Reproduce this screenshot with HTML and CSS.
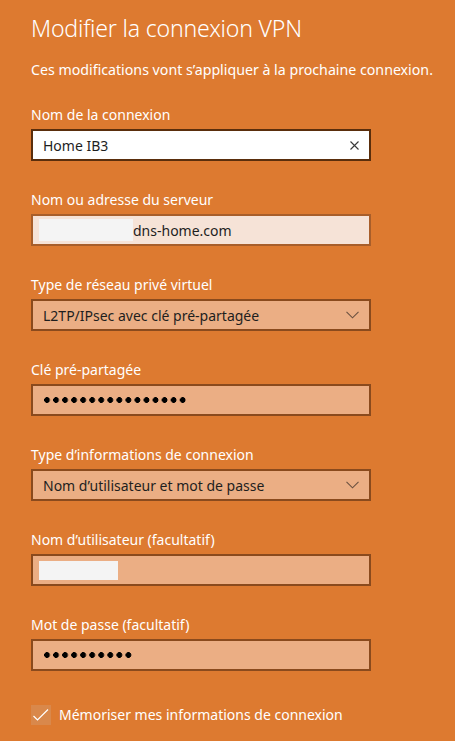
FILE: index.html
```html
<!DOCTYPE html>
<html lang="fr">
<head>
<meta charset="utf-8">
<title>Modifier la connexion VPN</title>
<link rel="stylesheet" href="styles.css">
</head>
<body>
<main class="panel">
  <h1 class="title">Modifier la connexion VPN</h1>
  <p class="intro">Ces modifications vont s’appliquer à la prochaine connexion.</p>

  <div class="group">
    <label class="label">Nom de la connexion</label>
    <div class="field field-focus">
      <span class="value">Home IB3</span>
      <svg class="icon-x" width="9" height="9" viewBox="0 0 9 9"><path d="M0.5 0.5L8.5 8.5M8.5 0.5L0.5 8.5" stroke="#3a3a3a" stroke-width="1.1" fill="none"/></svg>
    </div>
  </div>

  <div class="group">
    <label class="label">Nom ou adresse du serveur</label>
    <div class="field field-light">
      <span class="mask mask-server"></span><span class="value">dns-home.com</span>
    </div>
  </div>

  <div class="group">
    <label class="label">Type de réseau privé virtuel</label>
    <div class="field">
      <span class="value">L2TP/IPsec avec clé pré-partagée</span>
      <svg class="chev" width="13" height="8" viewBox="0 0 13 8"><path d="M0.5 0.8L6.5 6.8L12.5 0.8" stroke="#6b5140" stroke-width="1.1" fill="none"/></svg>
    </div>
  </div>

  <div class="group">
    <label class="label">Clé pré-partagée</label>
    <div class="field">
      <span class="dots dots-16"></span>
    </div>
  </div>

  <div class="group">
    <label class="label">Type d’informations de connexion</label>
    <div class="field">
      <span class="value">Nom d’utilisateur et mot de passe</span>
      <svg class="chev" width="13" height="8" viewBox="0 0 13 8"><path d="M0.5 0.8L6.5 6.8L12.5 0.8" stroke="#6b5140" stroke-width="1.1" fill="none"/></svg>
    </div>
  </div>

  <div class="group">
    <label class="label">Nom d’utilisateur (facultatif)</label>
    <div class="field">
      <span class="mask mask-user"></span>
    </div>
  </div>

  <div class="group">
    <label class="label">Mot de passe (facultatif)</label>
    <div class="field">
      <span class="dots dots-10"></span>
    </div>
  </div>

  <div class="check-row">
    <span class="checkbox">
      <svg width="20" height="20" viewBox="0 0 20 20"><path d="M2.5 11L6.5 15L17 4.5" stroke="#ffffff" stroke-width="1.2" fill="none"/></svg>
    </span>
    <span class="check-label">Mémoriser mes informations de connexion</span>
  </div>
</main>
</body>
</html>
```

FILE: styles.css
```css
html, body {
  margin: 0;
  padding: 0;
  background: #dd7a30;
}
body {
  font-family: "Noto Sans", "Open Sans", "Liberation Sans", sans-serif;
  color: #ffffff;
  width: 455px;
  height: 741px;
  overflow: hidden;
}
.panel {
  padding: 12px 0 0 31px;
  display: flex;
  flex-direction: column;
}
.title {
  margin: 0;
  font-weight: 300;
  font-size: 23.1px;
  line-height: 32px;
  letter-spacing: -0.2px;
}
.intro {
  margin: 16px 0 0;
  font-size: 14.2px;
  line-height: 20px;
}
.group {
  display: flex;
  flex-direction: column;
  margin-top: 25px;
  width: 340px;
}
.group + .group {
  margin-top: 29px;
}
.label {
  font-size: 14px;
  line-height: 20px;
  margin-bottom: 4px;
}
.field {
  box-sizing: border-box;
  height: 32px;
  width: 340px;
  border: 2px solid #8a4a1d;
  background: #ebae84;
  display: flex;
  align-items: center;
  padding: 0 10px 0 10px;
  color: #1e1e1e;
  font-size: 14px;
}
.field-focus {
  background: #ffffff;
  border-color: #5a2e0c;
}
.field-light {
  background: #f6e3d7;
  border-color: #a85e2a;
  padding-left: 6px;
}
.value {
  white-space: nowrap;
  flex: 1;
}
.mask {
  display: block;
  background: #f4f4f4;
  flex: none;
}
.mask-server {
  width: 94px;
  height: 22px;
}
.mask-user {
  width: 79px;
  height: 19px;
  margin-left: -4px;
}
.dots {
  display: block;
  height: 8px;
  background: radial-gradient(circle at 3px 4px, #000 2.6px, transparent 3.1px) 0 0 / 9.05px 8px repeat-x;
  margin-left: 1px;
}
.dots-16 { width: 143px; }
.dots-10 { width: 89px; }
.check-row {
  display: flex;
  align-items: center;
  margin-top: 34px;
  gap: 8px;
}
.checkbox {
  width: 20px;
  height: 20px;
  background: #d9884b;
  display: block;
}
.checkbox svg { display: block; }
.check-label {
  font-size: 14px;
  line-height: 20px;
}
```
